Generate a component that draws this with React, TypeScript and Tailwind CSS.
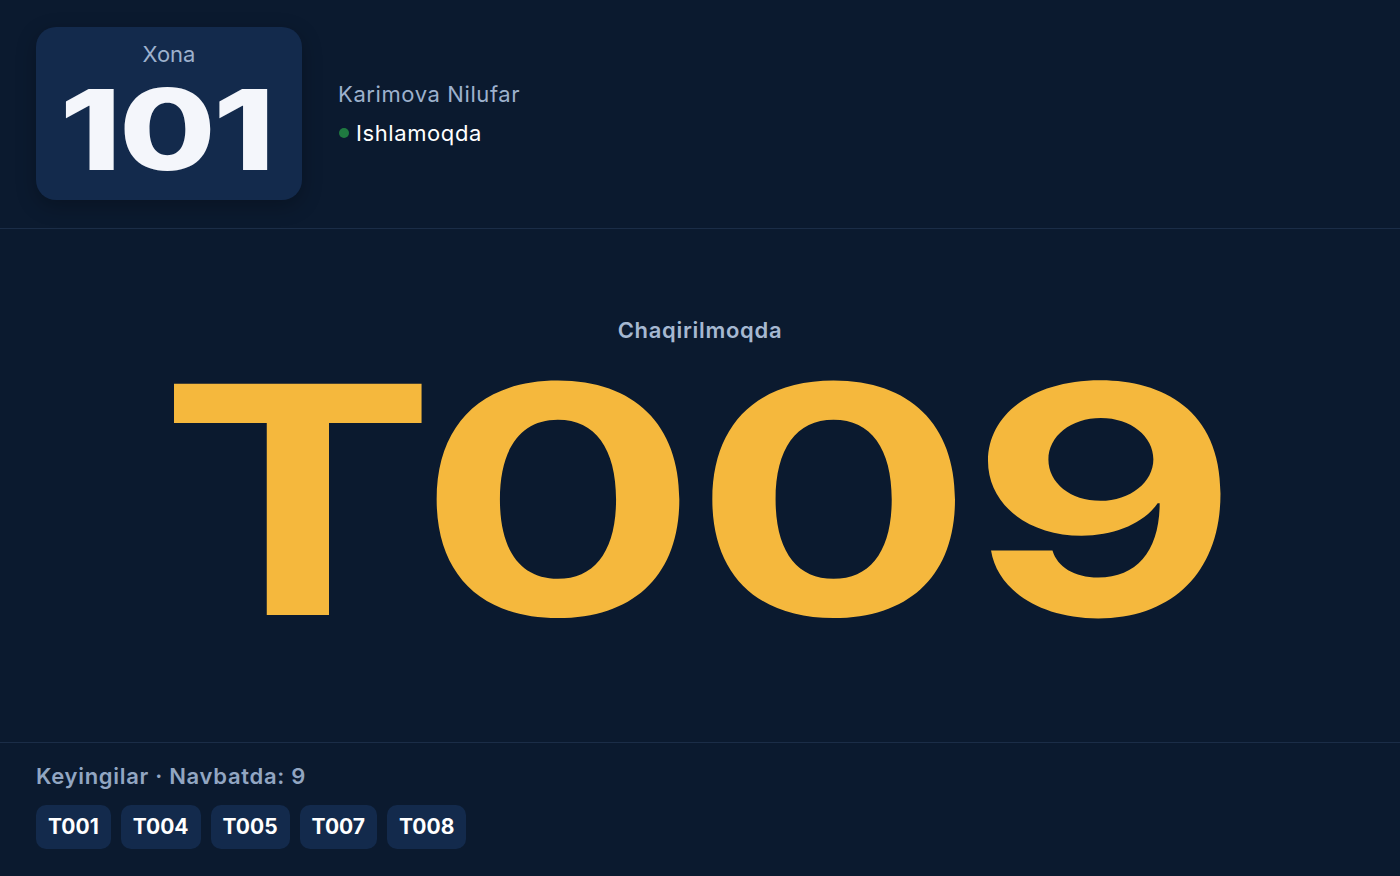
const queue = ['T001', 'T004', 'T005', 'T007', 'T008'];

export default function App() {
  return (
    <div
      className="w-[1400px] h-[876px] bg-[#0b1a2f] text-white flex flex-col overflow-hidden"
      style={{ fontFamily: 'Inter, "Noto Sans", sans-serif' }}
    >
      {/* Header */}
      <div className="h-[229px] shrink-0 border-b border-[#1b2d47] px-9 pt-[27px] flex items-start gap-9">
        <div className="w-[266px] h-[173px] rounded-[20px] bg-[#132a4c] shadow-[0_6px_20px_rgba(0,0,0,0.25)] flex flex-col items-center pt-[12px]">
          <div className="text-[22px] leading-[30px] text-[#9db1cd]">Xona</div>
          <div className="mt-[15px] mr-[6px] text-[112px] leading-[90px] font-extrabold tracking-[-2px] text-[#f4f6fb] scale-x-[1.25]">
            101
          </div>
        </div>
        <div className="pt-[52px] flex flex-col gap-[9px]">
          <div className="text-[22px] leading-[30px] tracking-[0.6px] text-[#9db1cd]">Karimova Nilufar</div>
          <div className="flex items-center gap-[7px] pl-[1px]">
            <span className="w-[10px] h-[10px] rounded-full bg-[#1f7a40]" />
            <span className="text-[22px] leading-[30px] tracking-[0.6px] text-white">Ishlamoqda</span>
          </div>
        </div>
      </div>

      {/* Now calling */}
      <div className="flex-1 flex flex-col items-center pt-[86px]">
        <div className="text-[22px] leading-[30px] font-semibold tracking-[0.7px] text-[#a6b8d1]">Chaqirilmoqda</div>
        <div className="mt-[25px] mr-[8px] text-[318px] leading-[260px] font-bold text-[#f5b83d] tracking-[-4px] scale-x-[1.31]">
          T009
        </div>
      </div>

      {/* Queue */}
      <div className="h-[134px] shrink-0 border-t border-[#1b2d47] px-9 pt-[18px]">
        <div className="text-[22px] leading-[30px] font-semibold tracking-[0.7px] text-[#92a6c2]">
          Keyingilar · Navbatda: 9
        </div>
        <div className="mt-[14px] flex gap-[10px]">
          {queue.map((t) => (
            <div
              key={t}
              className="h-[44px] px-[12px] rounded-[10px] bg-[#132a4c] flex items-center text-[21px] font-bold text-white"
            >
              {t}
            </div>
          ))}
        </div>
      </div>
    </div>
  );
}
